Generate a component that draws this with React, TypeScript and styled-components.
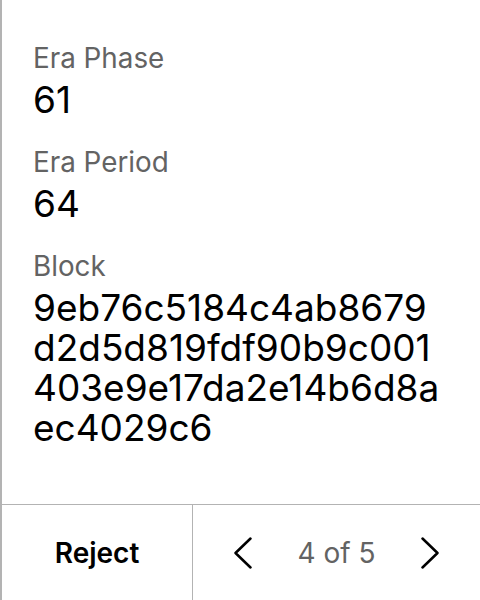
import React from 'react'
import styled, { createGlobalStyle } from 'styled-components'

const GlobalStyle = createGlobalStyle`
  html, body {
    margin: 0;
    padding: 0;
    background: #ffffff;
  }
  body {
    font-family: Inter, "Noto Sans", sans-serif;
    color: #000000;
  }
`

const Screen = styled.div`
  height: 100vh;
  display: flex;
  flex-direction: column;
  border-left: 2px solid #b3b3b3;
  box-sizing: border-box;
`

const Details = styled.div`
  flex: 1;
  padding: 40px 32px 0 31px;
  display: flex;
  flex-direction: column;
  gap: 24px;
`

const Field = styled.div`
  display: flex;
  flex-direction: column;
  gap: 4px;
`

const Label = styled.div`
  font-size: 27.8px;
  line-height: 36px;
  color: #636363;
`

const Value = styled.div`
  font-size: 37px;
  line-height: 40px;
  color: #000000;
  word-break: break-all;
`

const Footer = styled.div`
  height: 95px;
  flex-shrink: 0;
  border-top: 1px solid #b3b3b3;
  display: grid;
  grid-template-columns: 191px 1fr;
`

const RejectButton = styled.button`
  border: none;
  border-right: 1px solid #b3b3b3;
  background: transparent;
  font-family: inherit;
  font-size: 28px;
  font-weight: 600;
  color: #000000;
  padding: 0;
`

const Pager = styled.div`
  display: flex;
  align-items: center;
  justify-content: center;
  gap: 45px;
`

const PageText = styled.span`
  font-size: 28px;
  color: #636363;
`

const ArrowButton = styled.button`
  border: none;
  background: transparent;
  padding: 0;
  display: flex;
  align-items: center;
`

const Chevron = ({ dir }: { dir: 'left' | 'right' }) => (
  <svg width="18" height="32" viewBox="0 0 18 32" fill="none">
    <polyline
      points={dir === 'left' ? '16.5,1.5 1.5,16 16.5,30.5' : '1.5,1.5 16.5,16 1.5,30.5'}
      stroke="#000"
      strokeWidth="2.5"
      strokeLinecap="round"
      strokeLinejoin="round"
    />
  </svg>
)

const fields = [
  { label: 'Era Phase', value: '61' },
  { label: 'Era Period', value: '64' },
  {
    label: 'Block',
    value: '9eb76c5184c4ab8679d2d5d819fdf90b9c001403e9e17da2e14b6d8aec4029c6',
  },
]

export default function App() {
  return (
    <>
      <GlobalStyle />
      <Screen>
        <Details>
          {fields.map((f) => (
            <Field key={f.label}>
              <Label>{f.label}</Label>
              <Value>{f.value}</Value>
            </Field>
          ))}
        </Details>
        <Footer>
          <RejectButton>Reject</RejectButton>
          <Pager>
            <ArrowButton>
              <Chevron dir="left" />
            </ArrowButton>
            <PageText>4 of 5</PageText>
            <ArrowButton>
              <Chevron dir="right" />
            </ArrowButton>
          </Pager>
        </Footer>
      </Screen>
    </>
  )
}
